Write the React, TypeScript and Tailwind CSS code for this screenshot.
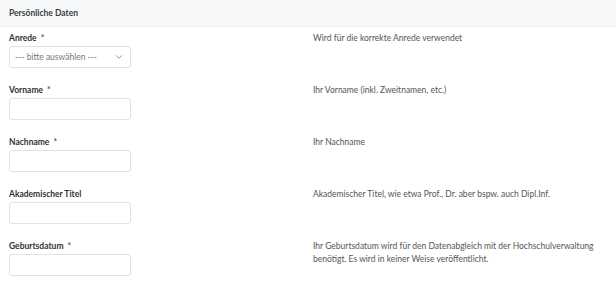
import { ChevronDown } from "lucide-react";

interface Field {
  label: string;
  required: boolean;
  hint: string;
  select?: boolean;
}

const fields: Field[] = [
  { label: "Anrede", required: true, hint: "Wird für die korrekte Anrede verwendet", select: true },
  { label: "Vorname", required: true, hint: "Ihr Vorname (inkl. Zweitnamen, etc.)" },
  { label: "Nachname", required: true, hint: "Ihr Nachname" },
  { label: "Akademischer Titel", required: false, hint: "Akademischer Titel, wie etwa Prof., Dr. aber bspw. auch Dipl.Inf." },
  {
    label: "Geburtsdatum",
    required: true,
    hint: "Ihr Geburtsdatum wird für den Datenabgleich mit der Hochschulverwaltung benötigt. Es wird in keiner Weise veröffentlicht.",
  },
];

export default function App() {
  return (
    <div className="w-[616px] h-[289px] bg-white overflow-hidden font-['Lato',sans-serif] text-[#333]">
      <div className="h-[27px] bg-[#f7f8f9] border-b border-[#eceef0] flex items-center px-[9px]">
        <h2 className="text-[8.5px] font-bold text-[#3a3f44]">Persönliche Daten</h2>
      </div>

      <div className="px-[9px] pt-[4px] flex flex-col gap-[15px]">
        {fields.map(f => (
          <div key={f.label} className="flex">
            <div className="w-[304px] shrink-0">
              <label className="block text-[8.5px] leading-[14px] font-bold text-[#333] mb-[1px]">
                {f.label}
                {f.required && <span className="ml-[4px] text-[#555]">*</span>}
              </label>
              {f.select ? (
                <div className="w-[122px] h-[22px] rounded-[3px] border border-[#dfe2e6] flex items-center justify-between pl-[5px] pr-[6px]">
                  <span className="text-[8.5px] text-[#777]">--- bitte auswählen ---</span>
                  <ChevronDown className="w-[10px] h-[10px] text-[#555]" strokeWidth={1.5} />
                </div>
              ) : (
                <div className="w-[122px] h-[22px] rounded-[3px] border border-[#dfe2e6]" />
              )}
            </div>
            <p className="text-[8.5px] leading-[13px] pt-[1px] text-[#555] max-w-[290px]">{f.hint}</p>
          </div>
        ))}
      </div>
    </div>
  );
}
